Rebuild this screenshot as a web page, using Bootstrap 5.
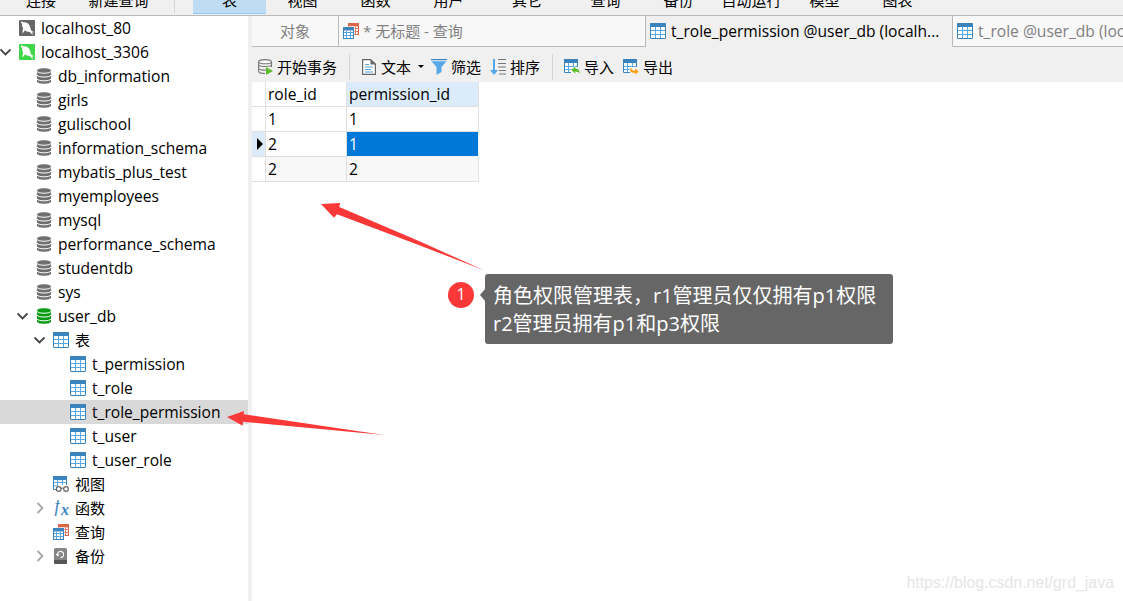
<!DOCTYPE html>
<html lang="zh-CN">
<head>
  <meta charset="UTF-8">
  <title>t_role_permission @user_db</title>
  <link href="https://cdn.jsdelivr.net/npm/bootstrap@5.3.3/dist/css/bootstrap.min.css" rel="stylesheet">
  <style>
    body { font-family: "Open Sans", "Noto Sans CJK SC", sans-serif; font-size: 15px; line-height: 24px; color: #000; background: #fff; }
    svg { flex: none; display: block; }
    .latin { font-size: 15.6px; }
    .ribbon { height: 16px; background: #f0f0f0; border-bottom: 1px solid #b9b9b9; }
    .ribbon-item { width: 73px; height: 14px; line-height: 0; text-align: center; flex: none; }
    .ribbon-item.first { width: 82px; }
    .ribbon-item.wide { width: 84px; }
    .ribbon-item.active { background: #c0dcf3; border-bottom: 1px solid #90c8f6; }
    .ribbon-sep { width: 1px; height: 13px; background: #d5d5d5; margin: 0 18px 0 19px; }
    .tree { width: 248px; flex: none; }
    .tree-row { height: 24px; }
    .tree-row.selected { background: #d9d9d9; }
    .twisty { width: 19px; flex: none; }
    .tree-icon { width: 22px; flex: none; }
    .splitter { width: 4px; flex: none; background: #f0f0f0; }
    .tab-strip { height: 31px; background: #f0f0f0; }
    .doc-tab { height: 31px; background: #f8f8f8; color: #808080; border-right: 1px solid #b9b9b9; border-bottom: 1px solid #b9b9b9; flex: none; white-space: nowrap; }
    .doc-tab.active { background: #f0f0f0; color: #000; border-bottom-color: #f0f0f0; }
    .doc-tab svg { margin-right: 5px; }
    .tab-object { width: 87px; }
    .tab-query { width: 307px; padding-left: 4px; }
    .tab-query svg { margin-right: 4px; }
    .tab-current { width: 307px; padding-left: 4px; }
    .tab-next { width: 171px; padding-left: 4px; border-right: 0; }
    .tools { height: 35px; background: #f0f0f0; padding: 4px 0 0 6px; }
    .tool { gap: 4px; margin-right: 9px; }
    .tool.begin { gap: 3px; }
    .tool-sep { width: 1px; height: 26px; background: #d5d5d5; margin: 0 11px 0 3px; }
    .caret { border: 3px solid transparent; border-top-color: #000; border-bottom: 0; margin: 0 -2px 0 3px; }
    .data-grid { display: grid; grid-template-columns: 14px 81px 132px; grid-auto-rows: 25px; width: 227px; font-size: 15.6px; }
    .data-grid > div { border-right: 1px solid #e0e0e0; border-bottom: 1px solid #e0e0e0; padding-left: 2px; }
    .data-grid > .current { background: #dbebf9; }
    .data-grid > .picked { background: #0078d7; color: #fff; border-color: #e8f2fb; }
    .data-grid > .alt { background: #f8f8f8; }
    .arrows { left: 0; top: 0; pointer-events: none; }
    .mark-no { left: 448px; top: 282px; width: 26px; height: 26px; background: #fb3838; color: #fff; font-size: 16px; line-height: 24px; }
    .note { left: 485px; top: 274px; width: 408px; height: 70px; padding: 8px; background: #666; color: #fff; border-radius: 3px; font-size: 20px; line-height: 28px; white-space: nowrap; }
    .note::before { content: ""; position: absolute; left: -5px; top: 15px; border: 6px solid transparent; border-right: 5px solid #666; border-left: 0; }
    .watermark { right: 9px; bottom: 8px; font: 15.9px/20px "Liberation Sans", sans-serif; color: #e6e6e6; }
  </style>
</head>
<body class="vh-100 overflow-hidden position-relative d-flex flex-column">

  <!-- Icons -->
  <svg class="d-none">
    <symbol id="i-conn" viewBox="0 0 16 16">
      <rect width="16" height="16" rx="1" fill="currentColor"/>
      <path d="M1.800 2C2.600 1.200 3.600 1.400 4.400 2.300C7.500 2 10 3.600 11 6.500C11.500 8.300 11.700 9.800 12.500 10.700L15.200 12.300L13 12.500L14 15C12.600 14.500 11.800 12.800 10.700 12C8.500 12 7 11.300 6 10.300L3.700 13.500C3.400 11.500 3.600 9.800 4.200 8.500C3 6.800 3.200 5.300 3 4Z" fill="#fff"/>
    </symbol>
    <symbol id="i-db" viewBox="0 0 16 16">
      <path d="M1 2.500C1-.5 15-.5 15 2.500V13.500C15 16.500 1 16.500 1 13.500Z" fill="currentColor"/>
      <path d="M1 3.500C3 5.800 13 5.800 15 3.500M1 7.300C3 9.600 13 9.600 15 7.300M1 11.100C3 13.400 13 13.400 15 11.100" fill="none" stroke="#fff" stroke-width="1"/>
    </symbol>
    <symbol id="i-table" viewBox="0 0 16 16">
      <rect x=".5" y=".5" width="15" height="15" rx=".5" fill="#fff" stroke="#3b83bd"/>
      <path d="M0 1Q0 0 1 0H15Q16 0 16 1V4H0Z" fill="#3b83bd"/>
      <path d="M1 7.500H15M1 11.500H15M5.500 4V15M10.500 4V15" stroke="#56a8e8"/>
    </symbol>
    <symbol id="i-view" viewBox="0 0 16 16">
      <path d="M.5 3V13.500H4M13.500 3V9" fill="none" stroke="#3b83bd"/>
      <path d="M0 0H14V4H0Z" fill="#3b83bd"/>
      <path d="M1 6.500H13M1 10H5M4.500 4V10M9.500 4V9" stroke="#56a8e8"/>
      <g fill="#fff" stroke="#666" stroke-width="1.200"><circle cx="5.700" cy="13" r="2.300"/><circle cx="13" cy="13" r="2.300"/><path d="M8 12.500Q9.300 11.500 10.700 12.500" fill="none"/></g>
    </symbol>
    <symbol id="i-query" viewBox="0 0 16 16">
      <rect x="5.500" y=".5" width="10" height="11" fill="#fff" stroke="#db6748"/>
      <path d="M5 0H16V3.500H5Z" fill="#db6748"/>
      <path d="M11 5.500H15M11 8.500H15M12.500 4V11" stroke="#e07a5f"/>
      <rect x="-.5" y="3.500" width="12" height="13" fill="#fff"/>
      <rect x=".5" y="4.500" width="10" height="11" fill="#fff" stroke="#3b83bd"/>
      <path d="M0 4H11V7.500H0Z" fill="#3b83bd"/>
      <path d="M1 9.500H10M1 12.500H10M3.500 8V15M7.500 8V15" stroke="#56a8e8"/>
    </symbol>
    <symbol id="i-fx" viewBox="0 0 16 16">
      <text x="1.500" y="12" font-family="Liberation Serif, serif" font-style="italic" font-size="18" fill="#3b83bd">f</text>
      <text x="8" y="15" font-family="Liberation Serif, serif" font-style="italic" font-weight="bold" font-size="16" fill="#3b83bd">x</text>
    </symbol>
    <symbol id="i-backup" viewBox="0 0 16 16">
      <rect x="1" width="13" height="16" rx="1.500" fill="#858585"/>
      <path d="M1 12H14V14.500Q14 16 12.500 16H2.500Q1 16 1 14.500Z" fill="#555"/>
      <path d="M4.600 7.500A3.100 3.100 0 1 1 7.500 9.600M3.200 6L4.600 7.800L6.200 6.300" fill="none" stroke="#fff" stroke-width="1.100"/>
    </symbol>
    <symbol id="i-begin" viewBox="0 0 16 16">
      <path d="M.6 2.700V12.500C1 14 4 14.500 7 14.500M13.500 2.700V8M.6 6C2 8 12 8 13.500 6M.6 9.500C2 11.300 5 11.300 8 11" fill="none" stroke="#777" stroke-width="1.100"/>
      <ellipse cx="7" cy="2.700" rx="6.400" ry="2.100" fill="#f8f8f8" stroke="#777" stroke-width="1.100"/>
      <path d="M8 8L15 12L8 16Z" fill="#5ebd2c"/>
    </symbol>
    <symbol id="i-doc" viewBox="0 0 16 16">
      <path d="M1.600.6H9.500L14.400 5V15.400H1.600Z" fill="#fff" stroke="#666" stroke-width="1.200"/>
      <path d="M9.500.5V5.500H14.500Z" fill="#666"/>
      <path d="M4 5.500H8M4 8H12M4 10.500H10M4 13H12" stroke="#56a0dc"/>
    </symbol>
    <symbol id="i-filter" viewBox="0 0 16 16">
      <path d="M.5 2.200H15.500L10.500 8V13L5.500 16V8Z" fill="#56a8e8"/>
      <path d="M0 0H16V1.200H0Z" fill="#3b83bd"/>
    </symbol>
    <symbol id="i-sort" viewBox="0 0 16 16">
      <path d="M3 0H5V11H8L4 16L0 11H3Z" fill="#56a8e8"/>
      <path d="M8 .5H16M8 4.500H16M8 8H16M9 11.500H16M9 15H16" stroke="#777" stroke-width="1.100"/>
    </symbol>
    <symbol id="i-part" viewBox="0 0 16 16">
      <path d="M0 0H14V14H0Z" fill="#fff"/>
      <path d="M.5 3V13.500H7M13.500 3V8" fill="none" stroke="#3b83bd"/>
      <path d="M0 0H14V4H0Z" fill="#3b83bd"/>
      <path d="M1 7.500H13M1 10.500H8M4.500 4V13M9.500 4V8" stroke="#56a8e8"/>
    </symbol>
    <symbol id="i-import" viewBox="0 0 16 16">
      <use href="#i-part" width="16" height="16"/>
      <path d="M7 11L11.500 7V9.300Q16 9.500 16 15Q14.500 12.800 11.500 12.800V15Z" fill="#5ebd2c" stroke="#f0f0f0" stroke-width=".5"/>
    </symbol>
    <symbol id="i-export" viewBox="0 0 16 16">
      <use href="#i-part" width="16" height="16"/>
      <path d="M16 12.500L12 8.800V11.200H10Q8.800 11 8.500 9H7Q6.500 14 10 14H12V16Z" fill="#ff9d0a" stroke="#f0f0f0" stroke-width=".5"/>
    </symbol>
  </svg>

  <!-- Main toolbar -->
  <div class="ribbon d-flex flex-shrink-0">
    <div class="ribbon-item first">连接</div>
    <div class="ribbon-item">新建查询</div>
    <div class="ribbon-sep"></div>
    <div class="ribbon-item active">表</div>
    <div class="ribbon-item">视图</div>
    <div class="ribbon-item">函数</div>
    <div class="ribbon-item">用户</div>
    <div class="ribbon-item wide">其它</div>
    <div class="ribbon-item">查询</div>
    <div class="ribbon-item">备份</div>
    <div class="ribbon-item">自动运行</div>
    <div class="ribbon-item">模型</div>
    <div class="ribbon-item">图表</div>
  </div>

  <div class="d-flex flex-grow-1">
    <div class="tree" id="tree"></div>
    <div class="splitter"></div>

    <div class="flex-grow-1 overflow-hidden">
      <!-- Tabs -->
      <div class="tab-strip d-flex overflow-hidden">
        <div class="doc-tab tab-object d-flex align-items-center justify-content-center">对象</div>
        <div class="doc-tab tab-query d-flex align-items-center"><svg width="16" height="16"><use href="#i-query"/></svg><span>* 无标题 - 查询</span></div>
        <div class="doc-tab tab-current active d-flex align-items-center"><svg width="16" height="16"><use href="#i-table"/></svg><span class="latin">t_role_permission @user_db (localh...</span></div>
        <div class="doc-tab tab-next d-flex align-items-center"><svg width="16" height="16"><use href="#i-table"/></svg><span class="latin">t_role @user_db (localhost_3306)</span></div>
      </div>

      <!-- Grid tools -->
      <div class="tools d-flex align-items-center">
        <div class="tool begin d-flex align-items-center"><svg width="16" height="16"><use href="#i-begin"/></svg>开始事务</div>
        <div class="tool-sep"></div>
        <div class="tool d-flex align-items-center"><svg width="16" height="16"><use href="#i-doc"/></svg>文本<div class="caret"></div></div>
        <div class="tool d-flex align-items-center"><svg width="16" height="16"><use href="#i-filter"/></svg>筛选</div>
        <div class="tool d-flex align-items-center"><svg width="16" height="16"><use href="#i-sort"/></svg>排序</div>
        <div class="tool-sep"></div>
        <div class="tool d-flex align-items-center"><svg width="16" height="16"><use href="#i-import"/></svg>导入</div>
        <div class="tool d-flex align-items-center"><svg width="16" height="16"><use href="#i-export"/></svg>导出</div>
      </div>

      <!-- Rows -->
      <div class="data-grid">
        <div></div><div>role_id</div><div class="current">permission_id</div>
        <div></div><div>1</div><div>1</div>
        <div class="current d-flex align-items-center"><svg width="10" height="12"><path d="M3 0L9 6L3 12Z"/></svg></div><div>2</div><div class="picked">1</div>
        <div></div><div class="alt">2</div><div class="alt">2</div>
      </div>
    </div>
  </div>

  <!-- Annotations -->
  <svg class="arrows position-absolute" width="1123" height="601" fill="#fb3838">
    <path d="M321 204L340 203L339.300 207L420 241.500L484 270.300L420 245.500L337 214.300L334 217.700Z"/>
    <path d="M227 417L244 411L243.700 414.300L384 435L243 421.700L242.700 425.700Z"/>
  </svg>
  <div class="mark-no position-absolute rounded-circle text-center">1</div>
  <div class="note position-absolute">角色权限管理表，r1管理员仅仅拥有p1权限<br>r2管理员拥有p1和p3权限</div>
  <div class="watermark position-absolute">https://blog.csdn.net/grd_java</div>

  <script src="https://cdn.jsdelivr.net/npm/bootstrap@5.3.3/dist/js/bootstrap.bundle.min.js"></script>
  <script>
    // [level, icon, text, color, twisty]
    const nodes = [
      [0, 'conn', 'localhost_80', '#666'],
      [0, 'conn', 'localhost_3306', '#3fd649', 'open'],
      [1, 'db', 'db_information', '#707070'],
      [1, 'db', 'girls', '#707070'],
      [1, 'db', 'gulischool', '#707070'],
      [1, 'db', 'information_schema', '#707070'],
      [1, 'db', 'mybatis_plus_test', '#707070'],
      [1, 'db', 'myemployees', '#707070'],
      [1, 'db', 'mysql', '#707070'],
      [1, 'db', 'performance_schema', '#707070'],
      [1, 'db', 'studentdb', '#707070'],
      [1, 'db', 'sys', '#707070'],
      [1, 'db', 'user_db', '#0a9b14', 'open'],
      [2, 'table', '表', '', 'open'],
      [3, 'table', 't_permission'],
      [3, 'table', 't_role'],
      [3, 'table', 't_role_permission'],
      [3, 'table', 't_user'],
      [3, 'table', 't_user_role'],
      [2, 'view', '视图'],
      [2, 'fx', '函数', '', 'closed'],
      [2, 'query', '查询'],
      [2, 'backup', '备份', '', 'closed']
    ];
    const twisties = {
      open: '<svg width="11" height="8"><path d="M.5 1.500L5.500 6.500L10.500 1.500" fill="none" stroke="#444" stroke-width="1.800"/></svg>',
      closed: '<svg width="11" height="12"><path d="M3.500 1L8.500 6L3.500 11" fill="none" stroke="#a6a6a6" stroke-width="1.800"/></svg>'
    };
    const tree = document.getElementById('tree');
    nodes.forEach(([level, icon, text, color, twisty]) => {
      tree.innerHTML += `
        <div class="tree-row d-flex align-items-center ${text === 't_role_permission' ? 'selected' : ''}" style="padding-left: ${level * 17}px">
          <div class="twisty">${twisties[twisty] || ''}</div>
          <div class="tree-icon" style="color: ${color || '#000'}"><svg width="16" height="16"><use href="#i-${icon}"/></svg></div>
          <span class="${level === 2 ? '' : 'latin'}">${text}</span>
        </div>
      `;
    });
  </script>
</body>
</html>
